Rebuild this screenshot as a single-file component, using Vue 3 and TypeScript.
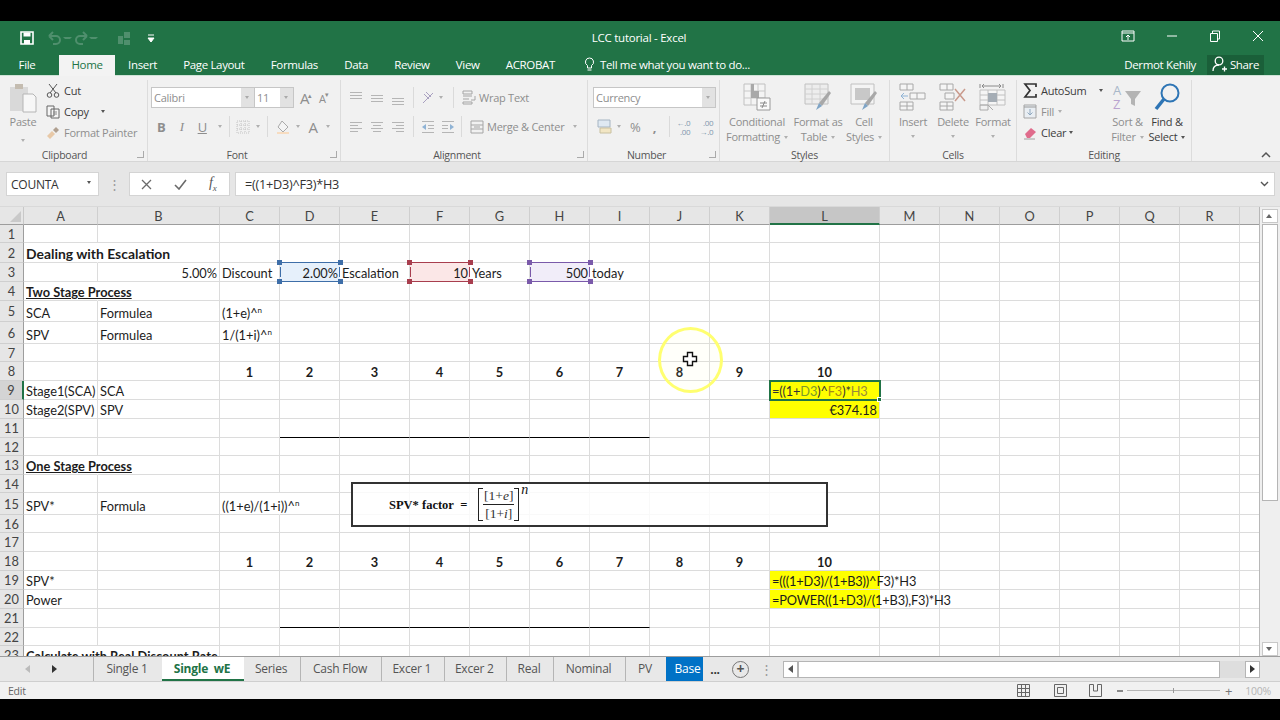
<script setup lang="ts">
interface Part {
  text: string
  color?: string
}

interface Cell {
  r: number
  c: string
  text?: string
  sup?: string
  parts?: Part[]
  cls?: string
}

const columns = ['A', 'B', 'C', 'D', 'E', 'F', 'G', 'H', 'I', 'J', 'K', 'L', 'M', 'N', 'O', 'P', 'Q', 'R', 'S']
const rows = Array.from({ length: 23 }, (_, i) => i + 1)

const nums = ['1', '2', '3', '4', '5', '6', '7', '8', '9', '10']
const numCols = ['C', 'D', 'E', 'F', 'G', 'H', 'I', 'J', 'K', 'L']

const data: Cell[] = [
  { r: 2, c: 'A', text: 'Dealing with Escalation', cls: 'bold over heading' },
  { r: 3, c: 'B', text: '5.00%', cls: 'right' },
  { r: 3, c: 'C', text: 'Discount' },
  { r: 3, c: 'D', text: '2.00%', cls: 'right range blue' },
  { r: 3, c: 'E', text: 'Escalation' },
  { r: 3, c: 'F', text: '10', cls: 'right range red' },
  { r: 3, c: 'G', text: 'Years' },
  { r: 3, c: 'H', text: '500', cls: 'right range purple' },
  { r: 3, c: 'I', text: 'today' },
  { r: 4, c: 'A', text: 'Two Stage Process', cls: 'bold under over' },
  { r: 5, c: 'A', text: 'SCA' },
  { r: 5, c: 'B', text: 'Formulea' },
  { r: 5, c: 'C', text: '(1+e)^', sup: 'n' },
  { r: 6, c: 'A', text: 'SPV' },
  { r: 6, c: 'B', text: 'Formulea' },
  { r: 6, c: 'C', text: '1/(1+i)^', sup: 'n' },
  { r: 9, c: 'A', text: 'Stage1(SCA)' },
  { r: 9, c: 'B', text: 'SCA' },
  {
    r: 9,
    c: 'L',
    cls: 'yellow active formula',
    parts: [
      { text: '=((1+' },
      { text: 'D3', color: '#7c9a2a' },
      { text: ')^' },
      { text: 'F3', color: '#a8881c' },
      { text: ')*' },
      { text: 'H3', color: '#9a8c3a' }
    ]
  },
  { r: 10, c: 'A', text: 'Stage2(SPV)' },
  { r: 10, c: 'B', text: 'SPV' },
  { r: 10, c: 'L', text: '€374.18', cls: 'yellow right' },
  { r: 13, c: 'A', text: 'One Stage Process', cls: 'bold under over' },
  { r: 15, c: 'A', text: 'SPV*' },
  { r: 15, c: 'B', text: 'Formula' },
  { r: 15, c: 'C', text: '((1+e)/(1+i))^', sup: 'n', cls: 'over' },
  { r: 19, c: 'A', text: 'SPV*' },
  { r: 19, c: 'L', text: '=(((1+D3)/(1+B3))^F3)*H3', cls: 'yellow over formula' },
  { r: 20, c: 'A', text: 'Power' },
  { r: 20, c: 'L', text: '=POWER((1+D3)/(1+B3),F3)*H3', cls: 'yellow over formula' },
  { r: 23, c: 'A', text: 'Calculate with Real Discount Rate', cls: 'bold over' }
]

numCols.forEach((c, i) => {
  data.push({ r: 8, c, text: nums[i], cls: 'bold center' })
  data.push({ r: 18, c, text: nums[i], cls: 'bold center' })
})

const lookup = new Map(data.map((d) => [`${d.r}:${d.c}`, d]))

function cellAt(r: number, c: string): Cell | undefined {
  return lookup.get(`${r}:${c}`)
}

function ruled(r: number, c: string): boolean {
  return (r === 11 || r === 21) && 'DEFGHI'.includes(c)
}

const sheetTabs = [
  { name: 'Single 1', cls: 't-single' },
  { name: 'Single  wE', cls: 't-active' },
  { name: 'Series', cls: 't-series' },
  { name: 'Cash Flow', cls: 't-cash' },
  { name: 'Excer 1', cls: 't-excer' },
  { name: 'Excer 2', cls: 't-excer' },
  { name: 'Real', cls: 't-real' },
  { name: 'Nominal', cls: 't-nominal' },
  { name: 'PV', cls: 't-pv' }
]

const menu = ['Insert', 'Page Layout', 'Formulas', 'Data', 'Review', 'View', 'ACROBAT']
</script>

<template>
  <div class="screen">
    <div class="black"></div>

    <div class="title">
      <div class="qat">
        <svg class="q-save" width="16" height="16" viewBox="0 0 16 16"><path d="M2 2h12v12H2z" fill="none" stroke="#fff" stroke-width="1.6"/><path d="M4.5 2.5h7v4h-7zM5 10h6v4H5z" fill="#fff"/></svg>
        <svg class="q-undo" width="16" height="14" viewBox="0 0 16 14"><path d="M2 5h7a4 4 0 0 1 0 8H6M2 5l4-4M2 5l4 4" fill="none" stroke="#4f8f6d" stroke-width="2"/></svg>
        <i class="q-chev"></i>
        <svg class="q-redo" width="16" height="14" viewBox="0 0 16 14"><path d="M14 5H7a4 4 0 0 0 0 8h3M14 5l-4-4M14 5l-4 4" fill="none" stroke="#4f8f6d" stroke-width="2"/></svg>
        <i class="q-chev"></i>
        <svg class="q-touch" width="18" height="18" viewBox="0 0 18 18"><path d="M3 7h5v8H3zM9 3h6v6H9zM9 11h6v5H9z" fill="#4f8f6d"/></svg>
        <svg class="q-more" width="8" height="9" viewBox="0 0 8 9"><path d="M1 1h6M1 4h6l-3 4z" stroke="#fff" fill="#fff"/></svg>
      </div>
      <span class="title-text">LCC tutorial - Excel</span>
      <div class="win">
        <svg width="14" height="14" viewBox="0 0 14 14"><path d="M1 2h12v10H1zM1 4h12M7 11V6M5 8l2-2 2 2" fill="none" stroke="#fff"/></svg>
        <svg width="12" height="12" viewBox="0 0 12 12"><path d="M1 6h10" stroke="#fff"/></svg>
        <svg width="12" height="12" viewBox="0 0 12 12"><path d="M1.5 3.5h7v8h-7zM3.5 3V1h7v8H9" fill="none" stroke="#fff"/></svg>
        <svg width="12" height="12" viewBox="0 0 12 12"><path d="M1 1l10 10M11 1L1 11" stroke="#fff"/></svg>
      </div>
    </div>

    <div class="menu">
      <span class="m-file">File</span>
      <span class="m-home">Home</span>
      <span v-for="m in menu" :key="m" class="m-item">{{ m }}</span>
      <svg class="bulb" width="11" height="15" viewBox="0 0 11 15"><path d="M5.5 1a4 4 0 0 0-2 7.5V11h4V8.5a4 4 0 0 0-2-7.5zM3.5 13h4" fill="none" stroke="#fff"/></svg>
      <span class="tell">Tell me what you want to do...</span>
      <span class="user">Dermot Kehily</span>
      <span class="share">
        <svg width="15" height="16" viewBox="0 0 15 16"><circle cx="7" cy="5" r="3.8" fill="none" stroke="#fff" stroke-width="1.3"/><path d="M1 15c0-4 2.5-6 6-6M10 13h5M12.5 10.5v5" fill="none" stroke="#fff" stroke-width="1.3"/></svg>
        Share
      </span>
    </div>

    <div class="ribbon">
      <div class="grp g-clip">
        <div class="body">
          <div class="paste">
            <svg width="28" height="30" viewBox="0 0 28 30"><path d="M1 4h18v24H1z" fill="#d9d9d9"/><path d="M6 1h8v5H6z" fill="#c4bcb0"/><path d="M14 11h10l3 3v15H14z" fill="#f7f7f7" stroke="#b5b5b5"/></svg>
            <span class="off">Paste</span>
            <i class="chev"></i>
          </div>
          <div class="stack">
            <div class="line">
              <svg width="14" height="15" viewBox="0 0 14 15"><path d="M3 1l7 9M11 1l-7 9" stroke="#555" fill="none"/><circle cx="3.5" cy="12" r="2.3" fill="none" stroke="#555"/><circle cx="10.5" cy="12" r="2.3" fill="none" stroke="#555"/></svg>
              <span class="dark">Cut</span>
            </div>
            <div class="line">
              <svg width="14" height="14" viewBox="0 0 14 14"><path d="M1 1h7v10H1zM5 4h8v9H5z" fill="#f5f5f5" stroke="#666"/><path d="M7 7h4M7 9h4" stroke="#888"/></svg>
              <span class="dark">Copy</span>
              <i class="chev c-copy"></i>
            </div>
            <div class="line">
              <svg width="14" height="14" viewBox="0 0 14 14"><path d="M1 10l5-5 3 3-5 5z" fill="#e8c9a8"/><path d="M7 4l3-3 3 3-3 3z" fill="#b0a090"/></svg>
              <span class="off">Format Painter</span>
            </div>
          </div>
        </div>
        <div class="label">Clipboard<i class="launch"></i></div>
      </div>

      <div class="grp g-font">
        <div class="body col">
          <div class="tools r1">
            <span class="select s-font">Calibri<i class="drop"></i></span>
            <span class="select s-size">11<i class="drop"></i></span>
            <span class="glyph a-up">A<small>▴</small></span>
            <span class="glyph a-down">A<small>▾</small></span>
          </div>
          <div class="tools r2">
            <span class="glyph w20 strong">B</span>
            <span class="glyph w20 slant">I</span>
            <span class="glyph w20 undl">U</span>
            <i class="chev c-u"></i>
            <i class="sep s1"></i>
            <svg class="i-border" width="14" height="14" viewBox="0 0 14 14"><path d="M1 1h12v12H1zM1 5h12M1 9h12M5 1v12M9 1v12" fill="none" stroke="#c4c4c4" stroke-dasharray="1 1"/></svg>
            <i class="chev c-b"></i>
            <i class="sep s2"></i>
            <svg class="i-fill" width="16" height="16" viewBox="0 0 16 16"><path d="M7 2l6 6-5 5-5-5z" fill="#f4f4f4" stroke="#aaa"/><path d="M2 14h12" stroke="#f7dcc0" stroke-width="2"/></svg>
            <i class="chev c-f"></i>
            <span class="glyph a-color">A</span>
            <i class="chev c-a"></i>
          </div>
        </div>
        <div class="label l-launch">Font<i class="launch"></i></div>
      </div>

      <div class="grp g-align">
        <div class="body col">
          <div class="tools r1">
            <svg class="al" width="14" height="14" viewBox="0 0 14 14"><path d="M1 1.5h12M1 4.5h12M1 7.5h12" stroke="#b5b5b5"/></svg>
            <svg class="al" width="14" height="14" viewBox="0 0 14 14"><path d="M1 4.5h12M1 7.5h12M1 10.5h12" stroke="#b5b5b5"/></svg>
            <svg class="al" width="14" height="14" viewBox="0 0 14 14"><path d="M1 7.5h12M1 10.5h12M1 13.5h12" stroke="#b5b5b5"/></svg>
            <i class="sep a-s1"></i>
            <svg class="i-orient" width="14" height="15" viewBox="0 0 14 15"><path d="M2 13L12 3M3 4l5 5M5 2l5 5" stroke="#a9a0c0" fill="none"/></svg>
            <i class="chev w12"></i>
            <i class="sep a-s2"></i>
            <svg class="i-wrap" width="14" height="15" viewBox="0 0 14 15"><path d="M1 1h9v3H1zM1 6h9M1 9h6M1 12h9v2H1zM13 6v4H9" fill="none" stroke="#a5a5a5"/></svg>
            <span class="off wrap-t">Wrap Text</span>
          </div>
          <div class="tools r2">
            <svg class="al" width="14" height="14" viewBox="0 0 14 14"><path d="M1 2.5h12M1 5.5h8M1 8.5h12M1 11.5h8" stroke="#b5b5b5"/></svg>
            <svg class="al" width="14" height="14" viewBox="0 0 14 14"><path d="M1 2.5h12M3 5.5h8M1 8.5h12M3 11.5h8" stroke="#b5b5b5"/></svg>
            <svg class="al" width="14" height="14" viewBox="0 0 14 14"><path d="M1 2.5h12M5 5.5h8M1 8.5h12M5 11.5h8" stroke="#b5b5b5"/></svg>
            <i class="sep a-s1"></i>
            <svg class="i-ind" width="14" height="14" viewBox="0 0 14 14"><path d="M1 1.5h12M7 5.5h6M7 8.5h6M1 12.5h12" stroke="#b5b5b5"/><path d="M1 7l4-3v6z" fill="#8fb3d5"/></svg>
            <svg class="i-ind2" width="14" height="14" viewBox="0 0 14 14"><path d="M1 1.5h12M1 5.5h6M1 8.5h6M1 12.5h12" stroke="#b5b5b5"/><path d="M13 7L9 4v6z" fill="#8fb3d5"/></svg>
            <i class="sep a-s3"></i>
            <svg class="i-wrap" width="14" height="14" viewBox="0 0 14 14"><path d="M1 1h12v12H1zM1 5h12M1 9h12M4 7h6" fill="none" stroke="#a5a5a5"/></svg>
            <span class="off wrap-t">Merge &amp; Center</span>
            <i class="chev c-merge"></i>
          </div>
        </div>
        <div class="label l-launch">Alignment<i class="launch"></i></div>
      </div>

      <div class="grp g-num">
        <div class="body col">
          <div class="tools r1">
            <span class="select s-num">Currency<i class="drop"></i></span>
          </div>
          <div class="tools r2 n2">
            <svg class="i-acc" width="16" height="15" viewBox="0 0 16 15"><path d="M1 1h12v7H1z" fill="#dfe9f2" stroke="#a5b4c2"/><path d="M3 9h11v5H3z" fill="#f2e6c4" stroke="#c8c0a0"/></svg>
            <i class="chev w12"></i>
            <span class="glyph pct">%</span>
            <span class="glyph comma">,</span>
            <i class="sep n-s"></i>
            <span class="dec">←.0<br />.00</span>
            <span class="dec d2">.00<br />→.0</span>
          </div>
        </div>
        <div class="label l-launch">Number<i class="launch"></i></div>
      </div>

      <div class="grp g-styles">
        <div class="body">
          <div class="big b-cond">
            <svg width="28" height="28" viewBox="0 0 28 28"><path d="M1 1h21v21H1z" fill="#f4f4f4" stroke="#c0c0c0"/><path d="M1 8h21M1 15h21M8 1v21M15 1v21" stroke="#c8c8c8"/><path d="M8 8h8v7H8zM8 1h3v7H8z" fill="#a8a8a8"/><path d="M14 15h13v12H14z" fill="#fafafa" stroke="#9a9a9a"/><path d="M17 20h7M17 23h7M22 18l-3 7" stroke="#888" fill="none"/></svg>
            <span class="off">Conditional</span>
            <span class="off">Formatting<i class="chev inline"></i></span>
          </div>
          <div class="big b-table">
            <svg width="28" height="28" viewBox="0 0 28 28"><path d="M1 1h23v20H1z" fill="#ededed" stroke="#c0c0c0"/><path d="M1 6h23M1 11h23M1 16h23M8 1v20M16 1v20" stroke="#d0d0d0"/><path d="M15 20l10-12 2 2-9 13z" fill="#a8a8a8"/><path d="M12 27l3-7 3 3z" fill="#7ea4c6"/></svg>
            <span class="off">Format as</span>
            <span class="off">Table<i class="chev inline"></i></span>
          </div>
          <div class="big b-cell">
            <svg width="28" height="28" viewBox="0 0 28 28"><path d="M1 1h23v20H1z" fill="#f4f4f4" stroke="#c0c0c0"/><path d="M5 5h15v12H5z" fill="#c8c8c8"/><path d="M15 20l10-12 2 2-9 13z" fill="#a8a8a8"/><path d="M12 27l3-7 3 3z" fill="#7ea4c6"/></svg>
            <span class="off">Cell</span>
            <span class="off">Styles<i class="chev inline"></i></span>
          </div>
        </div>
        <div class="label">Styles</div>
      </div>

      <div class="grp g-cells">
        <div class="body">
          <div class="big b-cw">
            <svg width="28" height="28" viewBox="0 0 28 28"><path d="M1 1h13v6H1zM8 1v6M1 19h13v8H1zM1 23h13M8 19v8M11 10h15v6H11zM18 10v6" fill="#f5f5f5" stroke="#a8a8a8"/><path d="M2 13h7M2 13l3-3M2 13l3 3" stroke="#8fb3d5" fill="none"/></svg>
            <span class="off">Insert</span>
            <i class="chev"></i>
          </div>
          <div class="big b-cw">
            <svg width="28" height="28" viewBox="0 0 28 28"><path d="M1 1h13v6H1zM8 1v6M1 19h13v8H1zM1 23h13M8 19v8M6 10h9v6H6z" fill="#f5f5f5" stroke="#a8a8a8"/><path d="M16 6l10 12M26 6L16 18" stroke="#c99a8c" stroke-width="1.5"/></svg>
            <span class="off">Delete</span>
            <i class="chev"></i>
          </div>
          <div class="big b-cw">
            <svg width="28" height="28" viewBox="0 0 28 28"><path d="M1 1v4M24 1v4M3 3h19M3 3l2-2M3 3l2 2M22 3l-2-2M22 3l-2 2" stroke="#8a8a8a" fill="none"/><path d="M1 7h25v15H1zM9 7v15M18 7v15M1 12h25M1 17h25" fill="#f5f5f5" stroke="#c0c0c0"/><path d="M9 10h9v9H9z" fill="#a5adb5"/><path d="M1 22h8v5H1zM9 22l5 5" fill="none" stroke="#aaa"/></svg>
            <span class="off">Format</span>
            <i class="chev"></i>
          </div>
        </div>
        <div class="label">Cells</div>
      </div>

      <div class="grp g-edit">
        <div class="body">
          <div class="stack s-edit">
            <div class="line">
              <svg width="14" height="15" viewBox="0 0 14 15"><path d="M13 4V1H2l5 6.5L2 14h11v-3" fill="none" stroke="#333" stroke-width="1.7"/></svg>
              <span class="dark">AutoSum</span>
              <i class="chev c-auto"></i>
            </div>
            <div class="line">
              <svg width="14" height="15" viewBox="0 0 14 15"><path d="M1 1h12v13H1z" fill="#e9eef3" stroke="#a5a5a5"/><path d="M1 3h12" stroke="#999"/><path d="M7 5v6M4.5 8.5L7 11l2.5-2.5" fill="none" stroke="#8fa8bf"/></svg>
              <span class="off">Fill</span>
              <i class="chev c-fill"></i>
            </div>
            <div class="line">
              <svg width="14" height="14" viewBox="0 0 14 14"><path d="M2 8l6-6 5 4-6 6H4z" fill="#e06c8c"/><path d="M1 13h11" stroke="#a0a0a0"/></svg>
              <span class="dark">Clear</span>
              <i class="chev c-clear"></i>
            </div>
          </div>
          <div class="big b-sort">
            <svg width="28" height="28" viewBox="0 0 28 28"><path d="M11 8h16l-6 8v7l-4-2v-5z" fill="#b4b4b4"/></svg>
            <span class="az"><span class="az-a">A</span><span class="az-z">Z</span></span>
            <span class="off">Sort &amp;</span>
            <span class="off">Filter<i class="chev inline"></i></span>
          </div>
          <div class="big b-find">
            <svg width="28" height="28" viewBox="0 0 28 28"><circle cx="17" cy="10" r="8.5" fill="none" stroke="#2e75b5" stroke-width="2"/><path d="M11 16L3 26" stroke="#2e75b5" stroke-width="3.5"/></svg>
            <span class="dark">Find &amp;</span>
            <span class="dark">Select<i class="chev inline dk"></i></span>
          </div>
        </div>
        <div class="label">Editing</div>
      </div>

      <svg class="collapse" width="10" height="7" viewBox="0 0 10 7"><path d="M1 6l4-4 4 4" fill="none" stroke="#555" stroke-width="1.5"/></svg>
    </div>

    <div class="fbar">
      <div class="namebox">COUNTA<i class="drop dk"></i></div>
      <span class="grip">⋮</span>
      <div class="fx-btns">
        <svg width="11" height="11" viewBox="0 0 11 11"><path d="M1 1l9 9M10 1l-9 9" stroke="#6a6a6a" stroke-width="1.3"/></svg>
        <svg width="13" height="11" viewBox="0 0 13 11"><path d="M1 6l4 4 7-9" fill="none" stroke="#6a6a6a" stroke-width="1.6"/></svg>
        <span class="fx">f<sub>x</sub></span>
      </div>
      <div class="finput">
        <span>=((1+D3)^F3)*H3</span>
        <svg width="9" height="6" viewBox="0 0 9 6"><path d="M1 1l3.5 3.5L8 1" fill="none" stroke="#555" stroke-width="1.4"/></svg>
      </div>
    </div>

    <div class="sheet">
      <div class="grid">
        <div class="corner"><i></i></div>
        <div v-for="c in columns" :key="c" class="colh" :class="{ sel: c === 'L' }">{{ c === 'S' ? '' : c }}</div>
        <template v-for="r in rows" :key="r">
          <div class="rowh" :class="{ sel: r === 9 }">{{ r }}</div>
          <div
            v-for="c in columns"
            :key="c"
            class="cell"
            :class="[cellAt(r, c)?.cls, { ruled: ruled(r, c) }]"
          >
            <template v-if="cellAt(r, c)?.parts">
              <span class="txt"><span v-for="p in cellAt(r, c)?.parts" :key="p.text" :style="{ color: p.color }">{{ p.text }}</span></span>
            </template>
            <span v-else-if="cellAt(r, c)" class="txt">{{ cellAt(r, c)?.text }}<sup v-if="cellAt(r, c)?.sup">{{ cellAt(r, c)?.sup }}</sup></span>
            <template v-if="cellAt(r, c)?.cls?.includes('range')">
              <b class="h tl"></b><b class="h tr"></b><b class="h bl"></b><b class="h br"></b>
              <b class="tick t-left"></b><b class="tick t-right"></b>
            </template>
            <b v-if="cellAt(r, c)?.cls?.includes('active')" class="fill-handle"></b>
          </div>
        </template>

        <!-- picture pasted over the cells -->
        <div class="shape">
          <span class="eq-name">SPV* factor&nbsp;&nbsp;=</span>
          <span class="eq-bracket">
            <span class="eq-frac">
              <span class="eq-top">[1+<em>e</em>]</span>
              <span class="eq-bot">[1+<em>i</em>]</span>
            </span>
          </span>
          <em class="eq-exp">n</em>
        </div>

        <div class="ring">
          <svg width="16" height="16" viewBox="0 0 16 16"><path d="M5.5 1.5h5v4h4v5h-4v4h-5v-4h-4v-5h4z" fill="#fff" stroke="#111" stroke-width="1.4"/></svg>
        </div>
      </div>

      <div class="vscroll">
        <span class="arrow up"></span>
        <span class="thumb"></span>
        <span class="track"></span>
        <span class="arrow down"></span>
      </div>
    </div>

    <div class="tabbar">
      <div class="nav">
        <i class="tri left faded"></i>
        <i class="tri right"></i>
      </div>
      <span v-for="t in sheetTabs" :key="t.name" class="tab" :class="t.cls">{{ t.name }}</span>
      <span class="tab t-base">Base</span>
      <span class="more">...</span>
      <span class="plus">+</span>
      <span class="grip g2">⋮</span>
      <div class="hscroll">
        <span class="hbtn"><i class="tri left"></i></span>
        <span class="hthumb"></span>
        <span class="htrack"></span>
        <span class="hbtn"><i class="tri right"></i></span>
      </div>
    </div>

    <div class="status">
      <span class="edit">Edit</span>
      <svg class="v1" width="13" height="13" viewBox="0 0 13 13"><path d="M.5.5h12v12H.5zM.5 4.5h12M.5 8.5h12M4.5.5v12M8.5.5v12" fill="none" stroke="#666"/></svg>
      <svg class="v2" width="13" height="13" viewBox="0 0 13 13"><path d="M.5.5h12v12H.5z" fill="none" stroke="#666"/><path d="M3.5 3.5h6v6h-6z" fill="none" stroke="#666"/></svg>
      <svg class="v3" width="13" height="13" viewBox="0 0 13 13"><path d="M.5 9V.5h4V7h4V.5h4V12.5H.5z" fill="none" stroke="#666"/></svg>
      <span class="z-minus"></span>
      <span class="slider"><i></i></span>
      <span class="z-plus">+</span>
      <span class="z-val">100%</span>
    </div>

    <div class="black"></div>
  </div>
</template>

<style>
html,
body {
  margin: 0;
  background: #000;
}
</style>

<style scoped>
.screen {
  width: 1280px;
  height: 720px;
  display: flex;
  flex-direction: column;
  overflow: hidden;
  font-family: "Open Sans", "Liberation Sans", sans-serif;
  font-size: 11px;
  letter-spacing: -0.25px;
  color: #444;
}

.black {
  height: 21px;
  flex: none;
  background: #000;
}

/* title bar */
.title {
  height: 34px;
  flex: none;
  background: #217346;
  display: flex;
  align-items: center;
  position: relative;
  color: #fff;
}

.qat {
  display: flex;
  align-items: center;
  padding-left: 19px;
  width: 300px;
}

.q-undo { margin-left: 12px; }
.q-redo { margin-left: 1px; }
.q-touch { margin-left: 17px; }
.q-more { margin-left: 14px; }

.q-chev {
  width: 9px;
  height: 2px;
  flex: none;
  box-sizing: border-box;
  border-left: 2px solid transparent;
  border-right: 2px solid transparent;
  border-top: 2px solid #4f8f6d;
}

.title-text {
  position: absolute;
  left: 0;
  right: 2px;
  top: 9px;
  text-align: center;
  font-size: 11.5px;
}

.win {
  margin-left: auto;
  display: flex;
  align-items: center;
  gap: 31px;
  padding-right: 16px;
  margin-top: -4px;
}

/* menu row */
.menu {
  height: 21px;
  flex: none;
  background: #217346;
  display: flex;
  align-items: center;
  color: #fff;
  font-size: 11.5px;
  letter-spacing: -0.35px;
  box-sizing: border-box;
  border-bottom: 1px solid #cfe3d7;
  padding-bottom: 1px;
}

.m-file {
  width: 59px;
  text-align: center;
  padding-right: 5px;
  box-sizing: border-box;
}

.m-home {
  width: 56px;
  height: 21px;
  line-height: 19px;
  background: #f3f3f3;
  color: #217346;
  text-align: center;
  margin-bottom: -1px;
}

.m-item {
  padding: 0 13.1px;
}

.bulb { margin-left: 16px; }

.tell {
  margin-left: 5px;
}

.user {
  margin-left: auto;
  margin-right: 11px;
}

.share {
  width: 57px;
  height: 22px;
  margin-right: 16px;
  margin-top: -1px;
  background: #1a5f39;
  display: flex;
  align-items: center;
  justify-content: center;
  gap: 3px;
}

/* ribbon */
.ribbon {
  height: 86px;
  flex: none;
  box-sizing: border-box;
  background: #f1f1f1;
  padding-top: 4px;
  display: flex;
  position: relative;
  border-bottom: 1px solid #d6d6d6;
}

.grp {
  flex: none;
  display: flex;
  flex-direction: column;
  box-sizing: border-box;
  border-right: 1px solid #dcdcdc;
  height: 81px;
}

.g-clip { width: 148px; }
.g-font { width: 193px; }
.g-align { width: 247px; }
.g-num { width: 132px; }
.g-styles { width: 170px; }
.g-cells { width: 127px; }
.g-edit { width: 175px; }

.body {
  flex: 1;
  display: flex;
  min-height: 0;
}

.body.col {
  flex-direction: column;
  padding-top: 7px;
  gap: 8px;
}

.label {
  height: 14px;
  line-height: 17px;
  text-align: center;
  position: relative;
  font-size: 10.5px;
  color: #555;
}

.g-clip .label { padding-right: 18px; }
.l-launch { padding-right: 14px; }

.launch {
  position: absolute;
  right: 3px;
  top: 4px;
  width: 6px;
  height: 6px;
  border-left: 1px solid #aaa;
  border-bottom: 1px solid #aaa;
  transform: scaleX(-1);
}

.off { color: #8e8e8e; white-space: nowrap; }
.dark { color: #3c3c3c; white-space: nowrap; }

.chev {
  display: inline-block;
  width: 0;
  height: 0;
  border-left: 2.5px solid transparent;
  border-right: 2.5px solid transparent;
  border-top: 3px solid #b0b0b0;
  flex: none;
}

.chev.inline {
  margin-left: 4px;
  vertical-align: 2px;
}

.chev.dk { border-top-color: #555; }

.chev.w12 {
  margin: 0 3.5px;
}

.paste {
  width: 46px;
  display: flex;
  flex-direction: column;
  align-items: center;
  padding-top: 3px;
  box-sizing: border-box;
  line-height: 14px;
}

.paste span { margin-top: 2px; }
.paste .chev { margin-top: 10px; }

.stack {
  display: grid;
  grid-template-rows: repeat(3, 21px);
}

.line {
  display: flex;
  align-items: center;
  gap: 4px;
}

.c-copy { margin-left: 8px; border-top-color: #555; }
.c-merge { margin-left: 9px; }

/* font group and friends */
.tools {
  height: 21px;
  display: flex;
  align-items: center;
}

.g-font .tools { padding-left: 3px; }

.select {
  height: 21px;
  box-sizing: border-box;
  background: #fff;
  border: 1px solid #c6c6c6;
  display: flex;
  align-items: center;
  padding-left: 2px;
  color: #8e8e8e;
  position: relative;
}

.s-font { width: 104px; }
.s-size { width: 40px; margin-left: -1px; padding-left: 2px; }
.s-num { width: 123px; margin-left: 5px; }

.drop {
  position: absolute;
  right: 0;
  top: 0;
  bottom: 0;
  width: 13px;
  background: #e2e2e2;
}

.drop::after {
  content: "";
  position: absolute;
  left: 4px;
  top: 8px;
  border-left: 2.5px solid transparent;
  border-right: 2.5px solid transparent;
  border-top: 3px solid #aaa;
}

.glyph {
  color: #8e8e8e;
  text-align: center;
  font-size: 13px;
  flex: none;
}

.glyph small { font-size: 7px; vertical-align: 6px; margin-left: -1px; }
.a-up { margin-left: 6px; font-size: 15px; }
.a-down { margin-left: 7px; font-size: 11px; }
.w20 { width: 20.5px; }
.strong { font-weight: 700; }
.slant { font-style: italic; font-family: "Liberation Serif", serif; }
.undl { text-decoration: underline; }

.sep {
  width: 1px;
  height: 21px;
  flex: none;
  background: #dadada;
}

.c-u { margin-left: 5px; }
.s1 { margin-left: 7px; margin-right: 6px; }
.c-b { margin-left: 6.5px; }
.s2 { margin-left: 7px; margin-right: 7px; }
.i-fill { flex: none; }
.c-f { margin-left: 4.5px; }
.a-color { margin-left: 7.5px; width: 12px; font-size: 15px; }
.c-a { margin-left: 6.5px; }

.g-align .tools { padding-left: 8px; }
.al { width: 14px; margin-right: 7px; flex: none; }
.a-s1 { margin-left: 1px; margin-right: 7px; }
.a-s2 { margin-left: 7px; margin-right: 8px; }
.a-s3 { margin-left: 6px; margin-right: 8px; }
.i-ind { margin-right: 6px; }
.wrap-t { margin-left: 3px; }

.n2 { padding-left: 9px; }
.pct { margin-left: 6px; font-size: 13px; }
.comma { margin-left: 10px; width: 8px; font-weight: 700; }
.n-s { margin-left: 10px; margin-right: 7px; }

.dec {
  font-size: 8px;
  line-height: 9px;
  color: #7f97ad;
  text-align: right;
}

.d2 { margin-left: 9px; }

.big {
  display: flex;
  flex-direction: column;
  align-items: center;
  padding-top: 3px;
  box-sizing: border-box;
  line-height: 15px;
  position: relative;
  flex: none;
}

.big svg { margin-bottom: 3px; flex: none; }
.big > .chev { margin-top: 6px; }

.b-cond { width: 72px; margin-left: 1px; }
.b-table { width: 50px; }
.b-cell { width: 38px; margin-left: 2px; }

.b-cw { width: 40px; }
.b-cw:first-child { margin-left: 3px; }

.s-edit { width: 91px; padding-left: 6px; box-sizing: border-box; }
.c-auto { margin-left: 9px; border-top-color: #555; }
.c-clear { margin-left: -1px; border-top-color: #555; }

.b-sort { width: 39px; }
.b-find { width: 40px; }

.az {
  position: absolute;
  left: 5px;
  top: 3px;
  display: flex;
  flex-direction: column;
  font-size: 13px;
  line-height: 14px;
}

.az-a { color: #a9b8c9; }
.az-z { color: #b9a3cf; }

.collapse {
  position: absolute;
  left: 1261px;
  top: 75px;
}

/* formula bar */
.fbar {
  height: 45px;
  flex: none;
  box-sizing: border-box;
  background: #e6e6e6;
  display: flex;
  align-items: center;
  padding: 0 5px 0 6px;
  border-bottom: 1px solid #d9d9d9;
}

.namebox {
  width: 93px;
  height: 24px;
  box-sizing: border-box;
  background: #fff;
  display: flex;
  align-items: center;
  padding-left: 4px;
  position: relative;
  color: #333;
  border: 1px solid #d4d4d4;
  font-size: 12px;
}

.namebox .drop { background: none; }

.namebox .drop::after {
  border-top-color: #555;
  left: 2px;
}

.grip {
  width: 30px;
  text-align: center;
  color: #999;
  font-size: 13px;
}

.fx-btns {
  width: 101px;
  height: 24px;
  box-sizing: border-box;
  background: #fff;
  border: 1px solid #d4d4d4;
  display: flex;
  align-items: center;
  padding-left: 11px;
  gap: 22px;
}

.fx {
  font-family: "Liberation Serif", serif;
  font-style: italic;
  font-size: 14px;
  color: #555;
}

.fx sub { font-size: 9px; }

.finput {
  flex: 1;
  height: 24px;
  margin-left: 5px;
  box-sizing: border-box;
  background: #fff;
  border: 1px solid #d4d4d4;
  display: flex;
  align-items: center;
  justify-content: space-between;
  padding: 0 5px 0 9px;
  color: #333;
  font-size: 12.7px;
}

/* sheet */
.sheet {
  height: 449px;
  flex: none;
  background: #f0f0f0;
  display: flex;
  overflow: hidden;
}

.grid {
  width: 1260px;
  height: 449px;
  background: #fff;
  overflow: hidden;
  position: relative;
  display: grid;
  grid-template-columns: 24px 74px 122px 60px 60px 70px 60px 60px 60px 60px 60px 60px 110px 60px 60px 60px 60px 60px 60px 20px;
  grid-template-rows: 18px 18px 20px 19px 19px 21px 22px 18px 19px 19px 19px 19px 18px 19px 18px 22px 18px 19px 19px 19px 19px 19px 18px 19px;
  font-family: Lato, "Open Sans", sans-serif;
  font-size: 12.8px;
  letter-spacing: 0;
  color: #1c1c1c;
  border-right: 1px solid #b8b8b8;
  box-sizing: border-box;
}

.corner {
  background: #e6e6e6;
  border-bottom: 1px solid #9d9d9d;
  border-right: 1px solid #c8c8c8;
  position: relative;
}

.corner i {
  position: absolute;
  right: 2px;
  bottom: 2px;
  border-left: 11px solid transparent;
  border-bottom: 11px solid #c9c9c9;
}

.colh {
  background: #e6e6e6;
  border-right: 1px solid #cfcfcf;
  border-bottom: 1px solid #9d9d9d;
  text-align: center;
  line-height: 18px;
  color: #444;
}

.colh.sel {
  background: #c6c6c6;
  border-bottom: 2px solid #217346;
}

.rowh {
  background: #e6e6e6;
  border-right: 1px solid #9d9d9d;
  border-bottom: 1px solid #cfcfcf;
  text-align: center;
  display: flex;
  align-items: center;
  justify-content: center;
  color: #444;
}

.rowh.sel {
  background: #d4d4d4;
  border-right: 2px solid #217346;
}

.cell {
  position: relative;
  box-sizing: border-box;
  border-right: 1px solid #dcdcdc;
  border-bottom: 1px solid #dcdcdc;
  display: flex;
  align-items: flex-end;
  padding: 0 2px;
  line-height: 16px;
  min-width: 0;
  white-space: nowrap;
}

.txt { white-space: pre; }
.txt sup { font-size: 8px; line-height: 0; }
.over { border-right-color: transparent; }
.bold { font-weight: 700; }
.heading { font-size: 13.9px; }
.under .txt { text-decoration: underline; }
.right { justify-content: flex-end; }
.center { justify-content: center; }
.yellow { background: #ffff00; }
.formula { letter-spacing: -0.15px; }
.ruled { border-bottom: 1px solid #000; }

.cell.over .txt {
  position: relative;
  z-index: 1;
}

.range {
  border-top: 1px solid;
  border-bottom: 1px solid;
  border-left: 0;
  border-right: 0;
  margin-top: -1px;
}

.blue { background: #e6f0fb; border-color: #3e6ea8; }
.red { background: #fbe7e7; border-color: #a83e4e; }
.purple { background: #f1edf9; border-color: #7a5aaa; }

.h {
  position: absolute;
  width: 5px;
  height: 5px;
  z-index: 2;
}

.tick {
  position: absolute;
  top: 4px;
  width: 1px;
  height: 10px;
  z-index: 2;
}

.t-left { left: 0; }
.t-right { right: 0; }

.blue .h, .blue .tick { background: #3e6ea8; }
.red .h, .red .tick { background: #a83e4e; }
.purple .h, .purple .tick { background: #7a5aaa; }
.tl { left: -3px; top: -3px; }
.tr { right: -3px; top: -3px; }
.bl { left: -3px; bottom: -3px; }
.br { right: -3px; bottom: -3px; }

.active {
  outline: 2px solid #217346;
  outline-offset: -1px;
  z-index: 2;
  color: #333;
}

.fill-handle {
  position: absolute;
  right: -3px;
  bottom: -3px;
  width: 5px;
  height: 5px;
  background: #217346;
  border: 1px solid #fff;
  box-sizing: border-box;
}

.shape {
  position: absolute;
  left: 351px;
  top: 275px;
  width: 477px;
  height: 45px;
  box-sizing: border-box;
  border: 2px solid #333;
  background: rgba(255, 255, 255, 0.82);
  font-family: "Liberation Serif", serif;
  color: #111;
  display: flex;
  align-items: center;
  padding-left: 36px;
  z-index: 3;
}

.eq-name {
  font-weight: 700;
  font-size: 12.5px;
  white-space: nowrap;
  padding-top: 1px;
}

.eq-bracket {
  margin-left: 11px;
  height: 33px;
  width: 41px;
  box-sizing: border-box;
  border: 1.5px solid #222;
  border-image: linear-gradient(90deg, #222 0 5px, transparent 5px 36px, #222 36px) 1;
  display: flex;
  align-items: center;
  justify-content: center;
}

.eq-frac {
  display: flex;
  flex-direction: column;
  align-items: center;
  font-size: 13.5px;
  line-height: 15px;
  color: #333;
}

.eq-top { border-bottom: 1px solid #222; padding: 0 1px 1px; }
.eq-bot { padding-top: 1px; }
.eq-exp { font-size: 14px; align-self: flex-start; margin-left: 2px; line-height: 12px; }

.ring {
  position: absolute;
  left: 658px;
  top: 120px;
  width: 65px;
  height: 66px;
  box-sizing: border-box;
  padding: 0 2px 2px 0;
  border: 3.5px solid #ffff70;
  border-radius: 50%;
  background: rgba(255, 255, 190, 0.08);
  display: flex;
  align-items: center;
  justify-content: center;
  z-index: 4;
}

/* scrollbars */
.vscroll {
  flex: 1;
  display: flex;
  flex-direction: column;
  padding: 2px 2px 0;
  background: #efefef;
}

.arrow {
  height: 14px;
  flex: none;
  position: relative;
  background: #fff;
  border: 1px solid #c8c8c8;
  box-sizing: border-box;
}

.arrow::after {
  content: "";
  position: absolute;
  left: 3px;
  top: 4px;
  border-left: 3.5px solid transparent;
  border-right: 3.5px solid transparent;
}

.up::after { border-bottom: 4px solid #666; }
.down::after { border-top: 4px solid #666; }

.thumb {
  height: 277px;
  flex: none;
  background: #fff;
  border: 1px solid #b5b5b5;
  box-sizing: border-box;
  margin-top: 1px;
}

.track { flex: 1; }

.tabbar {
  height: 26px;
  flex: none;
  box-sizing: border-box;
  background: #e8e8e8;
  border-top: 1px solid #9d9d9d;
  border-bottom: 1px solid #cfcfcf;
  display: flex;
  align-items: center;
  color: #555;
  font-size: 12px;
}

.nav {
  width: 93px;
  display: flex;
  align-items: center;
  padding-left: 25px;
  gap: 22px;
  box-sizing: border-box;
}

.tri {
  display: inline-block;
  border-top: 4px solid transparent;
  border-bottom: 4px solid transparent;
  flex: none;
}

.tri.left { border-right: 5px solid #555; }
.tri.right { border-left: 5px solid #333; }
.tri.faded { border-right-color: #bbb; }

.tab {
  height: 24px;
  line-height: 23px;
  text-align: center;
  box-sizing: border-box;
  border-left: 1px solid #b5b5b5;
  white-space: pre;
  flex: none;
  padding-right: 2px;
}

.t-single { width: 69px; }

.t-active {
  width: 82px;
  background: #fff;
  color: #217346;
  font-weight: 700;
  border-left: 0;
  border-bottom: 2px solid #217346;
}

.t-series { width: 56px; border-left: 0; }
.t-cash { width: 81px; }
.t-excer { width: 62.5px; }
.t-real { width: 47px; }
.t-nominal { width: 72px; }
.t-pv { width: 41px; }

.t-base {
  width: 37px;
  height: 24px;
  background: #0072c6;
  color: #fff;
  border-left: 0;
  padding: 0 0 0 6px;
}

.more {
  width: 24px;
  text-align: center;
  font-weight: 700;
  color: #333;
}

.plus {
  width: 17px;
  height: 17px;
  margin-left: 5px;
  box-sizing: border-box;
  border: 1.5px solid #777;
  border-radius: 50%;
  text-align: center;
  line-height: 13px;
  font-weight: 700;
  color: #555;
  font-size: 14px;
}

.g2 { width: 33px; margin-left: 1px; }

.hscroll {
  width: 477px;
  height: 17px;
  display: flex;
  align-items: stretch;
}

.hbtn {
  width: 15px;
  flex: none;
  background: #fff;
  border: 1px solid #b5b5b5;
  box-sizing: border-box;
  display: flex;
  align-items: center;
  justify-content: center;
}

.hthumb {
  width: 422px;
  flex: none;
  background: #fff;
  border: 1px solid #b5b5b5;
  box-sizing: border-box;
}

.htrack {
  flex: 1;
  background: #dedede;
}

/* status bar */
.status {
  height: 17px;
  flex: none;
  background: #f1f1f1;
  display: flex;
  align-items: center;
  font-size: 10.5px;
  color: #666;
}

.edit { margin-left: 8px; width: 1009px; }
.v2 { margin-left: 24px; }
.v3 { margin-left: 22px; }

.z-minus {
  width: 6px;
  height: 2px;
  background: #888;
  margin-left: 15px;
}

.slider {
  width: 93px;
  height: 1px;
  margin-left: 4px;
  background: #b5b5b5;
  position: relative;
}

.slider i {
  position: absolute;
  left: 46px;
  top: -2px;
  width: 1px;
  height: 5px;
  background: #999;
}

.z-plus {
  margin-left: 5px;
  font-size: 13px;
  color: #777;
}

.z-val {
  margin-left: 13px;
  color: #b5b5b5;
}
</style>
